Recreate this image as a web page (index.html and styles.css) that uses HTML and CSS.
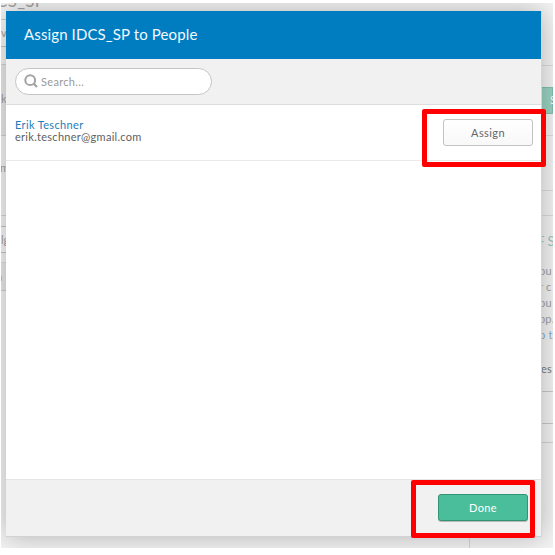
FILE: index.html
```
<!DOCTYPE html>
<html lang="en">
<head>
<meta charset="utf-8">
<title>Assign IDCS_SP to People</title>
<link rel="stylesheet" href="styles.css">
</head>
<body>
<div class="viewport">
  <div class="page">
    <div class="page-left">
      <div class="l-title"><span>CS_SP</span></div>
      <div class="l-field"><span>ve</span></div>
      <div class="l-gap"></div>
      <div class="l-band tall"><span>k</span></div>
      <div class="l-row"><span>m</span></div>
      <div class="l-gap small"></div>
      <div class="l-field second"><span>lg</span></div>
      <div class="l-gap tiny"></div>
      <div class="l-band"><span class="link">n</span></div>
    </div>
    <div class="page-right">
      <div class="r-top"></div>
      <div class="r-toolbar"><div class="r-button">S</div></div>
      <div class="r-row"></div>
      <div class="r-row short"></div>
      <div class="r-help">
        <h2>F S</h2>
        <p>ou<br>r c<br>ou<br>pp.<br><span class="link">o t</span></p>
        <p class="dark">es</p>
      </div>
      <div class="r-field"></div>
      <div class="r-end"></div>
    </div>
    <div class="page-divider"></div>
  </div>
  <section class="dialog">
    <header class="dialog-header"><h1>Assign IDCS_SP to People</h1></header>
    <div class="dialog-search">
      <div class="search">
        <svg width="15" height="15" viewBox="0 0 15 15" fill="none" stroke="#a3a3a3"><circle cx="6.2" cy="6.2" r="4.9" stroke-width="2"/><path d="M9.3 9.2 13 13" stroke-width="2.3"/></svg>
        <span>Search...</span>
      </div>
    </div>
    <div class="person">
      <div class="person-info">
        <a class="name">Erik Teschner</a>
        <span class="email">erik.teschner@gmail.com</span>
      </div>
      <button class="btn">Assign</button>
    </div>
    <div class="dialog-body"></div>
    <footer class="dialog-footer"><button class="btn primary">Done</button></footer>
  </section>
</div>
<div class="mark mark-assign"></div>
<div class="mark mark-done"></div>
</body>
</html>
```
FILE: styles.css
```
* { box-sizing: border-box; }
body {
  margin: 0;
  padding: 3px 2px 7px 1px;
  height: 555px;
  background: #fff;
  overflow: hidden;
  font-family: Lato, "Liberation Sans", sans-serif;
  font-size: 11px;
  color: #666;
}
h1, h2, p { margin: 0; font-weight: 400; }
.viewport { position: relative; height: 545px; overflow: hidden; }
.page {
  height: 545px;
  display: flex;
  justify-content: space-between;
  background: #f4f4f4;
  color: #a2a2a2;
}
.page-left { width: 60px; }
.page-left span { display: inline-block; }
.l-title { height: 17px; border-bottom: 1px solid #ccc; line-height: 0; }
.l-title span { font-size: 17px; line-height: 17px; margin: -12px 0 0 -5px; letter-spacing: .3px; }
.l-field { height: 27px; padding-top: 6px; border-bottom: 1px solid #c4c4c4; background: #f8f8f8; }
.l-field.second { border-top: 1px solid #c4c4c4; }
.l-gap { height: 18px; border-bottom: 1px solid #d4d4d4; }
.l-gap.small { height: 10px; border: 0; }
.l-gap.tiny { height: 10px; border-bottom: 1px solid #ddd; }
.l-band { height: 28px; padding-top: 7px; background: #eaeaea; border-bottom: 1px solid #d0d0d0; }
.l-band.tall { height: 71px; padding-top: 27px; }
.l-row { height: 80px; padding-top: 25px; border-bottom: 1px solid #d5d5d5; }
.l-row span { margin-left: -1px; }
.l-band .link { margin-left: -5px; }
.link { color: #88aec9; }
.page-right { width: 12px; }
.r-top { height: 63px; border-bottom: 1px solid #dcdcdc; }
.r-toolbar { height: 70px; padding-top: 21px; border-bottom: 1px solid #dcdcdc; }
.r-button {
  height: 27px;
  padding-left: 8px;
  border: 1px solid #84c0ae;
  background: #9bd3c2;
  color: #fff;
  line-height: 24px;
}
.r-row { height: 55px; border-bottom: 1px solid #dcdcdc; }
.r-row.short { height: 25px; }
.r-help { height: 176px; padding-top: 17px; border-bottom: 1px solid #c8c8c8; white-space: nowrap; line-height: 16px; }
.r-help h2 { font-size: 13px; line-height: 16px; color: #98c8bd; margin-left: -4px; }
.r-help p { margin: 14px 0 0 -2px; letter-spacing: .2px; }
.r-help p + p { margin-top: 18px; }
.r-help .dark { color: #7b7b7b; padding-left: 2px; }
.r-field { height: 32px; border-bottom: 1px solid #c8c8c8; }
.r-end { height: 19px; border-bottom: 1px solid #d4d4d4; }
.page-divider { position: absolute; left: 468px; bottom: 0; width: 1px; height: 12px; background: #d8d8d8; }
.dialog {
  position: absolute;
  left: 5px;
  top: 8px;
  width: 536px;
  height: 526px;
  display: flex;
  flex-direction: column;
  background: #fff;
  border-right: 1px solid #d5d5d5;
  border-bottom: 1px solid #d2d2d2;
  box-shadow: 0 0 26px rgba(0, 0, 0, .28);
}
.dialog-header { height: 48px; padding: 12px 18px; background: #007dc1; }
.dialog-header h1 { font-size: 15px; line-height: 23px; letter-spacing: .12px; color: #f2f8fc; white-space: nowrap; }
.dialog-search { height: 46px; padding: 9px; background: #f1f1f1; border-bottom: 1px solid #ddd; }
.search {
  width: 197px;
  height: 27px;
  padding: 0 8px;
  display: flex;
  align-items: center;
  gap: 2px;
  background: #fff;
  border: 1px solid #c5c5c5;
  border-radius: 14px;
  color: #999;
  letter-spacing: .32px;
}
.person { height: 56px; padding: 14px 8px 0 9px; display: flex; justify-content: space-between; border-bottom: 1px solid #e9e9e9; }
.person-info { display: flex; flex-direction: column; line-height: 12px; }
.name { color: #1f7db8; letter-spacing: .35px; }
.email { color: #606060; letter-spacing: .28px; }
.btn {
  width: 90px;
  height: 27px;
  padding: 0;
  border: 1px solid #c3c3c3;
  border-radius: 3px;
  background: linear-gradient(#fff, #f8f8f8);
  font: 11px Lato, "Liberation Sans", sans-serif;
  letter-spacing: .4px;
  color: #666;
}
.btn.primary { border-color: #329475; background: #4abd9b; color: #fff; box-shadow: 0 1px 0 #b8b8b8; }
.dialog-body { flex: 1; }
.dialog-footer { height: 57px; padding: 14px 13px 0; display: flex; justify-content: flex-end; background: #f1f1f1; border-top: 1px solid #e5e5e5; }
.mark { position: absolute; border: 5px solid #fe0000; border-radius: 2px; }
.mark-assign { left: 422px; top: 109px; width: 124px; height: 58px; }
.mark-done { left: 411px; top: 480px; width: 124px; height: 58px; }
```
